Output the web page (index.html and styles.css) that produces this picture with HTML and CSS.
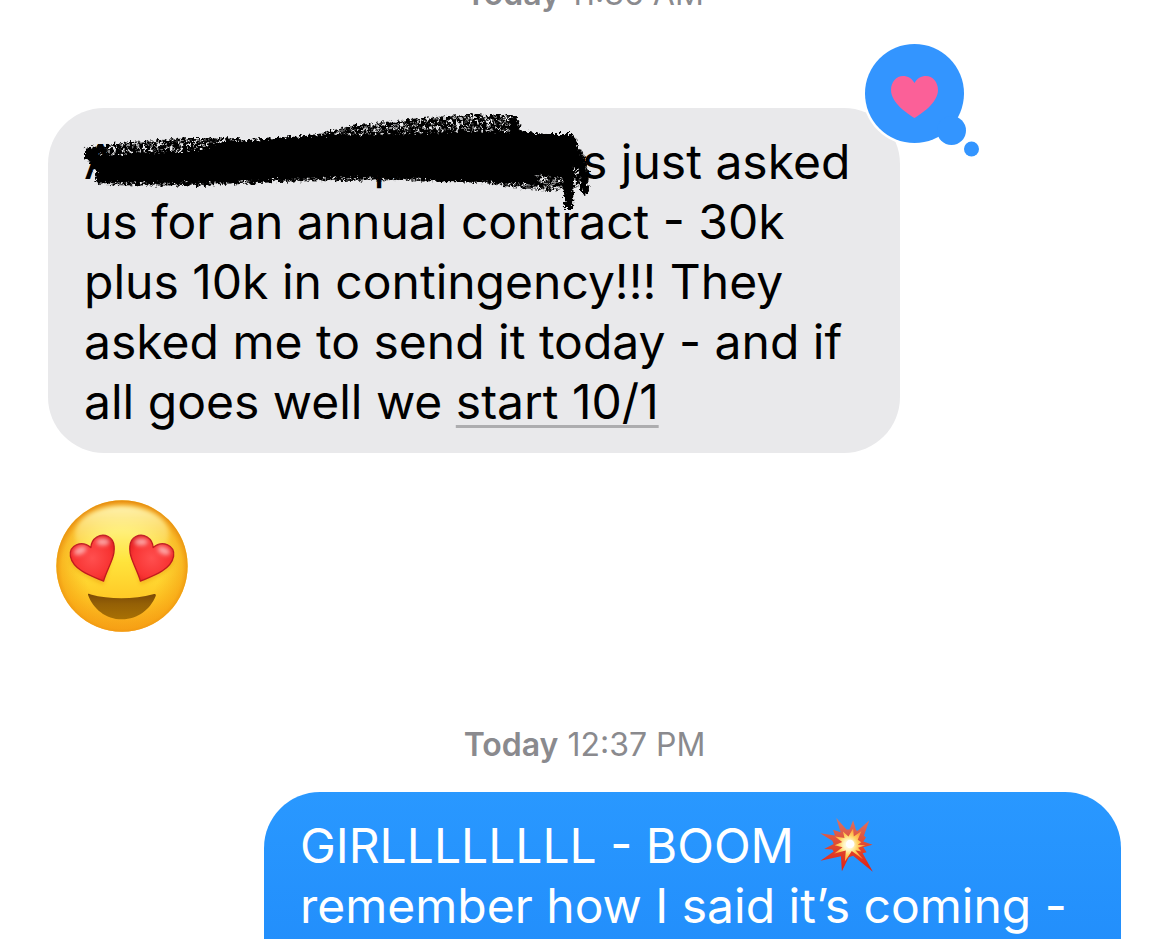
FILE: index.html
```html
<!DOCTYPE html>
<html lang="en">
<head>
    <meta charset="UTF-8">
    <meta name="viewport" content="width=device-width, initial-scale=1.0">
    <title>Messages</title>
    <link rel="stylesheet" href="styles.css">
</head>
<body>
    <main class="thread">
        <div class="timestamp"><strong>Today</strong> 11:36 AM</div>

        <div class="bubble received">
            <div class="line first-line">
                <span class="redacted">
                    <span>A</span><span class="middle">p</span>
                    <svg class="scribble" viewBox="80 108 530 110" aria-hidden="true">
                        <defs>
                            <filter id="rough" x="-5%" y="-20%" width="110%" height="140%">
                                <feTurbulence type="fractalNoise" baseFrequency="0.35" numOctaves="2" seed="4" result="noise"/>
                                <feDisplacementMap in="SourceGraphic" in2="noise" scale="9" xChannelSelector="R" yChannelSelector="G" result="torn"/>
                                <feGaussianBlur in="torn" stdDeviation="0.6"/>
                            </filter>
                            <filter id="grain" x="-5%" y="-20%" width="110%" height="140%">
                                <feTurbulence type="fractalNoise" baseFrequency="0.3" numOctaves="2" seed="9" result="noise"/>
                                <feColorMatrix in="noise" type="matrix" values="0 0 0 0 0  0 0 0 0 0  0 0 0 0 0  0 0 0 5 -1.6" result="dots"/>
                                <feComposite in="SourceGraphic" in2="dots" operator="in" result="chalk"/>
                                <feDisplacementMap in="chalk" in2="noise" scale="7" xChannelSelector="R" yChannelSelector="G" result="torn"/>
                                <feGaussianBlur in="torn" stdDeviation="0.5"/>
                            </filter>
                        </defs>
                        <g filter="url(#grain)">
                            <path d="M84 148 L130 142 L190 138 L240 138 L240 165 L90 165 Z"/>
                            <path d="M318 134 L350 126 L410 119 L460 115 L515 115 L519 120 L520 142 L318 145 Z"/>
                            <path d="M94 172 L340 170 L480 176 L480 182 L400 180 L280 182 L200 186 L98 185 Z"/>
                            <path d="M480 160 L582 158 L580 186 L550 191 L510 187 L480 182 Z"/>
                            <path d="M570 146 L582 150 L589 170 L588 193 L583 195 L580 172 Z"/>
                        </g>
                        <g filter="url(#rough)">
                            <path d="M85 149 L98 146 L100 155 L150 153 L200 150 L222 142 L262 139 L320 135 L400 134 L450 132 L510 132 L510 117 L517 118 L520 131 L545 134 L570 134 L576 138 L578 150 L585 162 L588 193 L582 193 L578 170 L574 166 L573 209 L565 209 L563 178 L535 175 L540 185 L500 182 L440 181 L410 178 L340 177 L270 180 L200 183 L98 182 L94 166 L85 158 Z"/>
                        </g>
                    </svg>
                </span><span>s just asked</span>
            </div>
            us for an annual contract - 30k<br>
            plus 10k in contingency!!! They<br>
            asked me to send it today - and if<br>
            all goes well we <a href="#">start 10/1</a>

            <svg class="reaction" viewBox="0 0 122 120" role="img" aria-label="Loved">
                <circle class="reaction-edge" cx="54.5" cy="53.5" r="52"/>
                <g class="reaction-fill">
                    <circle cx="54.5" cy="53.5" r="49.5"/>
                    <circle cx="91.5" cy="90.5" r="14.5"/>
                    <circle cx="111.5" cy="109" r="7.5"/>
                </g>
                <path class="heart" d="M54.500 78 C48 74 31 63 31 50 C31 42 36.500 36 43 36 C48 36 52 38.500 54.500 43 C57 38.500 61 36 66 36 C72.500 36 78 42 78 50 C78 63 61 74 54.500 78 Z"/>
            </svg>
        </div>

        <svg class="big-emoji" viewBox="36 28 394 394" role="img" aria-label="Smiling face with heart eyes">
            <defs>
                <linearGradient id="face" x1="0" y1="0" x2="0" y2="1">
                    <stop offset="0" stop-color="#ffee70"/>
                    <stop offset="0.45" stop-color="#ffe53d"/>
                    <stop offset="0.75" stop-color="#ffc926"/>
                    <stop offset="1" stop-color="#f9a51c"/>
                </linearGradient>
                <radialGradient id="rim" cx="0.5" cy="0.52" r="0.52">
                    <stop offset="0.55" stop-color="#f5a013" stop-opacity="0"/>
                    <stop offset="0.88" stop-color="#f59c10" stop-opacity="0.6"/>
                    <stop offset="1" stop-color="#e68a0c"/>
                </radialGradient>
                <linearGradient id="shine" x1="0" y1="0" x2="0" y2="1">
                    <stop offset="0" stop-color="#fffbc4" stop-opacity="0.85"/>
                    <stop offset="1" stop-color="#fff27a" stop-opacity="0"/>
                </linearGradient>
                <radialGradient id="eye" cx="0.5" cy="0.5" r="0.6">
                    <stop offset="0" stop-color="#ff4f4f"/>
                    <stop offset="0.7" stop-color="#f83433"/>
                    <stop offset="1" stop-color="#e01d20"/>
                </radialGradient>
                <linearGradient id="mouth" x1="0" y1="0" x2="0" y2="1">
                    <stop offset="0" stop-color="#7c4a06"/>
                    <stop offset="0.4" stop-color="#946006"/>
                    <stop offset="1" stop-color="#a87004"/>
                </linearGradient>
                <filter id="soft" x="-20%" y="-20%" width="140%" height="140%">
                    <feGaussianBlur stdDeviation="6"/>
                </filter>
                <g id="heart-eye">
                    <path d="M178 270 C150 258 88 240 79 196 C74 164 112 146 140 170 C142 142 168 126 192 137 C214 148 213 180 203 206 C196 226 185 246 178 270 Z" fill="url(#eye)" stroke="#c01a1e" stroke-width="4" stroke-linejoin="round"/>
                    <g fill="#fff" opacity="0.55" filter="url(#soft)">
                        <ellipse cx="108" cy="179" rx="20" ry="11" transform="rotate(-25 108 179)"/>
                        <ellipse cx="176" cy="153" rx="20" ry="11"/>
                    </g>
                </g>
            </defs>
            <circle cx="233" cy="225" r="196" fill="url(#face)"/>
            <circle cx="233" cy="225" r="196" fill="url(#rim)"/>
            <ellipse cx="233" cy="130" rx="140" ry="84" fill="url(#shine)" filter="url(#soft)"/>
            <g fill="#e58c10" opacity="0.5" filter="url(#soft)">
                <path d="M178 280 C140 262 90 245 78 205 L205 190 Z"/>
                <path d="M289 280 C327 262 377 245 389 205 L262 190 Z"/>
            </g>
            <use href="#heart-eye"/>
            <use href="#heart-eye" transform="matrix(-1 0 0 1 466 0)"/>
            <path d="M132 312 C130 307 134 307 140 310 C195 325 270 325 326 309 C333 307 336 309 333 316 C318 352 282 384 233 384 C184 384 147 352 132 312 Z" fill="url(#mouth)"/>
        </svg>

        <div class="timestamp second"><strong>Today</strong> 12:37 PM</div>

        <div class="bubble sent">
            GIRLLLLLLLL - BOOM
            <svg class="boom" viewBox="42 50 165 170" role="img" aria-label="Collision">
                <defs>
                    <linearGradient id="blast" x1="0" y1="0" x2="0" y2="1">
                        <stop offset="0" stop-color="#dc7467"/>
                        <stop offset="0.5" stop-color="#df4a31"/>
                        <stop offset="1" stop-color="#e31d12"/>
                    </linearGradient>
                    <radialGradient id="core" cx="0.45" cy="0.5" r="0.5">
                        <stop offset="0" stop-color="#fff"/>
                        <stop offset="0.3" stop-color="#fff6c4"/>
                        <stop offset="0.6" stop-color="#ffd260"/>
                        <stop offset="1" stop-color="#ff9b38"/>
                    </radialGradient>
                </defs>
                <path fill="url(#blast)" d="M92 53 L123 88 L132 88 L143 60 L152 90 L157 92 L192 61 L176 107 L182 112 L174 124 L202 134 L174 142 L184 157 L172 160 L203 216 L143 168 L130 172 L109 215 L106 169 L44 183 L84 155 L80 149 L55 147 L84 132 L80 122 L43 99 L88 106 L82 89 L105 96 Z"/>
                <path fill="url(#core)" d="M112 94 L129 109 L143 85 L145 109 L168 93 L157 119 L168 127 L157 134 L181 136 L158 143 L168 155 L150 151 L173 178 L139 153 L118 185 L121 152 L86 161 L111 142 L87 136 L110 126 L88 109 L117 114 Z"/>
                <circle cx="134" cy="132" r="13" fill="#fff"/>
            </svg><br>
            remember how I said it’s coming -
        </div>
    </main>
</body>
</html>
```
FILE: styles.css
```css
* {
    box-sizing: border-box;
}

body {
    margin: 0;
    background-color: #fff;
    font-family: Inter, "Liberation Sans", sans-serif;
}

.thread {
    height: 100vh;
    overflow: hidden;
    display: flex;
    flex-direction: column;
    padding: 0 49px 0 48px;
}

.thread > * {
    flex-shrink: 0;
}

.timestamp {
    margin-top: -26px;
    font-size: 32px;
    line-height: 40px;
    text-align: center;
    color: #8a8a8e;
}

.timestamp strong {
    font-weight: 600;
}

.timestamp.second {
    margin-top: 93px;
}

.bubble {
    position: relative;
    padding: 24px 36px;
    border-radius: 56px;
    font-size: 48px;
    line-height: 60px;
    white-space: nowrap;
}

.received {
    width: calc(100% - 221px);
    margin-top: 94px;
    padding-bottom: 21px;
    background-color: #e9e9eb;
    color: #000;
}

.received a {
    color: inherit;
    text-decoration: underline;
    text-decoration-color: #adadaf;
    text-decoration-thickness: 3px;
    text-underline-offset: 6px;
}

.sent {
    align-self: flex-end;
    width: calc(100% - 216px);
    min-height: 228px;
    margin-top: 27px;
    background: linear-gradient(#2998ff, #1f8afa);
    color: #fff;
}

.first-line {
    display: flex;
}

.redacted {
    position: relative;
    display: flex;
    width: 498px;
}

.middle {
    margin-left: 256px;
}

.scribble {
    position: absolute;
    top: -24px;
    left: -4px;
    width: 530px;
    height: 110px;
}

.reaction {
    position: absolute;
    top: -68px;
    right: -82px;
    width: 122px;
    height: 120px;
}

.reaction-edge {
    fill: #fff;
}

.reaction-fill {
    fill: #3395ff;
}

.heart {
    fill: #fb6098;
}

.big-emoji {
    width: 132px;
    height: 132px;
    margin-top: 47px;
    margin-left: 8px;
}

.boom {
    width: 56px;
    height: 56px;
    margin-left: 12px;
    vertical-align: -10px;
}
```
